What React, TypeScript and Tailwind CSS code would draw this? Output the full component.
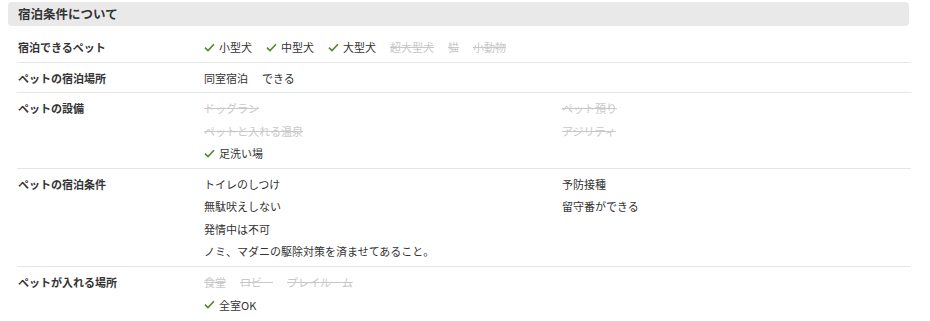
type Item = { text: string; ok?: boolean; off?: boolean };

const Check = () => (
    <svg width="11" height="9" viewBox="0 0 11 9" className="mr-[4px] shrink-0" aria-hidden>
        <path d="M1 4.6 L4 7.6 L10 1.2" fill="none" stroke="#4f8a2b" strokeWidth="1.6" />
    </svg>
);

function Val({ item }: { item: Item }) {
    if (item.off) {
        return <span className="text-[#c8c8c8] line-through decoration-[#c8c8c8]">{item.text}</span>;
    }
    return (
        <span className="inline-flex items-center">
            {item.ok && <Check />}
            {item.text}
        </span>
    );
}

function Row({ label, first, children }: { label: string; first?: boolean; children: React.ReactNode }) {
    return (
        <div className={`flex border-b border-[#e6e6e6] last:border-b-0 ${first ? "pt-[10px] pb-[3px]" : "pt-[4px] pb-[3px]"}`}>
            <div className="w-[187px] shrink-0 pl-[1px] font-bold text-[#333]">{label}</div>
            <div className="flex-1">{children}</div>
        </div>
    );
}

function Inline({ items }: { items: Item[] }) {
    return (
        <div className="flex flex-wrap gap-x-[14px]">
            {items.map((it) => (
                <Val key={it.text} item={it} />
            ))}
        </div>
    );
}

function Grid({ items }: { items: Item[] }) {
    return (
        <div className="grid grid-cols-[358px_1fr]">
            {items.map((it, i) => (
                <div key={i}>
                    <Val item={it} />
                </div>
            ))}
        </div>
    );
}

export default function App() {
    return (
        <div
            className="w-[930px] h-[321px] bg-white text-[11px] leading-[22.5px] text-[#333] pt-[2px] overflow-hidden"
            style={{ fontFamily: '"Noto Sans CJK JP", "Noto Sans", sans-serif' }}
        >
            <div className="ml-[8px] w-[901px] h-[24px] rounded-[4px] bg-[#e9e9e9] pl-[10px] flex items-center">
                <h2 className="text-[12.5px] font-bold text-[#333]">宿泊条件について</h2>
            </div>
            <div className="ml-[17px] w-[894px]">
                <Row label="宿泊できるペット" first>
                    <Inline
                        items={[
                            { text: "小型犬", ok: true },
                            { text: "中型犬", ok: true },
                            { text: "大型犬", ok: true },
                            { text: "超大型犬", off: true },
                            { text: "猫", off: true },
                            { text: "小動物", off: true },
                        ]}
                    />
                </Row>
                <Row label="ペットの宿泊場所">
                    <Inline items={[{ text: "同室宿泊" }, { text: "できる" }]} />
                </Row>
                <Row label="ペットの設備">
                    <Grid
                        items={[
                            { text: "ドッグラン", off: true },
                            { text: "ペット預り", off: true },
                            { text: "ペットと入れる温泉", off: true },
                            { text: "アジリティ", off: true },
                            { text: "足洗い場", ok: true },
                        ]}
                    />
                </Row>
                <Row label="ペットの宿泊条件">
                    <Grid
                        items={[
                            { text: "トイレのしつけ" },
                            { text: "予防接種" },
                            { text: "無駄吠えしない" },
                            { text: "留守番ができる" },
                            { text: "発情中は不可" },
                            { text: "" },
                        ]}
                    />
                    <div>ノミ、マダニの駆除対策を済ませてあること。</div>
                </Row>
                <Row label="ペットが入れる場所">
                    <Inline
                        items={[
                            { text: "食堂", off: true },
                            { text: "ロビー", off: true },
                            { text: "プレイルーム", off: true },
                        ]}
                    />
                    <div>
                        <Val item={{ text: "全室OK", ok: true }} />
                    </div>
                </Row>
            </div>
        </div>
    );
}
